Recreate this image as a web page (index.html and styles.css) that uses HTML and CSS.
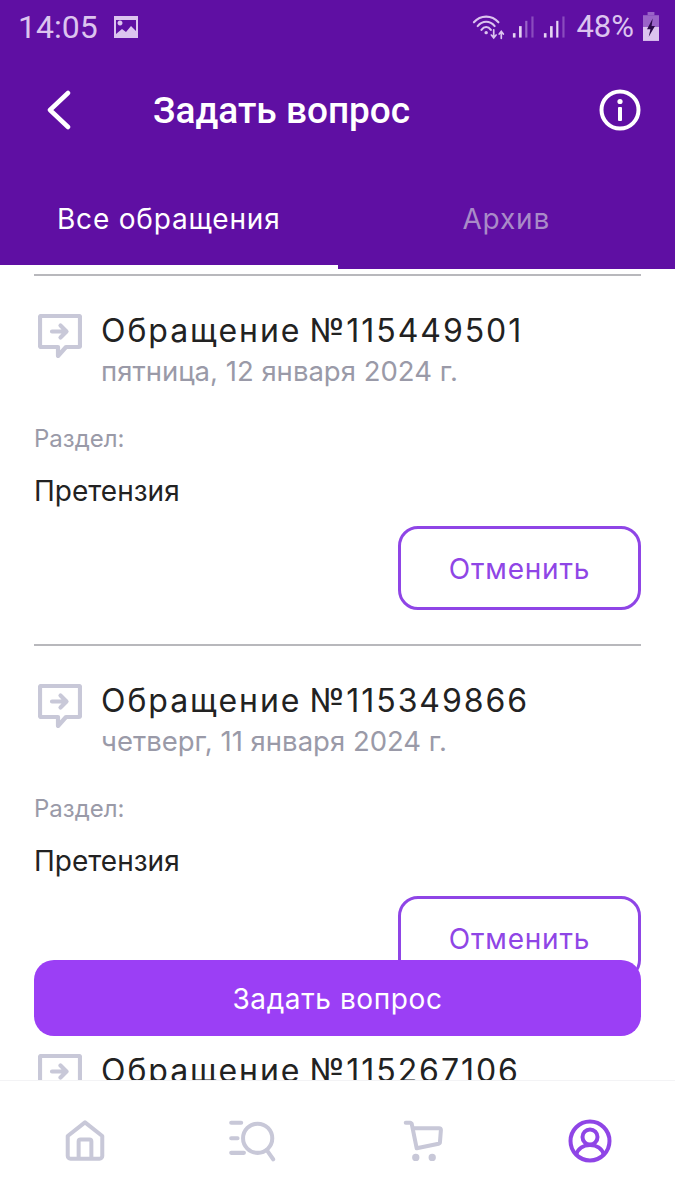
FILE: index.html
```html
<!DOCTYPE html>
<html lang="en">
<head>
    <meta charset="UTF-8">
    <meta name="viewport" content="width=device-width, initial-scale=1.0">
    <title>Задать вопрос</title>
    <link rel="stylesheet" href="styles.css">
</head>
<body>

    <div class="screen">
        <header class="top">
            <div class="status-bar">
                <div class="status-left">
                    <span class="clock">14:05</span>
                    <svg class="status-pic" width="26" height="24" viewBox="0 0 26 24">
                        <path fill="#dcc4ef" fill-rule="evenodd" d="M1 1h24v22H1z M7 5.500a2.500 2.500 0 1 0 .01 0z M3 19l6-5 4 3 5-6 5 5v-11H3z"/>
                    </svg>
                </div>
                <div class="status-right">
                    <svg class="wifi" width="34" height="28" viewBox="0 0 36 28" fill="none" stroke="#dcc4ef" stroke-width="2.200" stroke-linecap="round">
                        <path d="M2 9C9 1 21 1 28 9"/>
                        <path d="M6 13C11 7 19 7 24 13"/>
                        <path d="M10 17C13 13 17 13 20 17"/>
                        <circle cx="15" cy="20" r="1.800" fill="#dcc4ef" stroke="none"/>
                        <path d="M23 17v8M20.500 22.500l2.500 3 2.500-3M31 26v-7M28.800 21.500l2.200-2.800 2.200 2.800" stroke-width="1.800"/>
                    </svg>
                    <svg class="bars" width="22" height="26" viewBox="0 0 25 26">
                        <rect x="1" y="20" width="3" height="5" fill="#e6d5f3"/>
                        <rect x="8" y="12" width="3" height="13" fill="#e6d5f3"/>
                        <rect x="15" y="6" width="2.500" height="19" fill="#9a63c8"/>
                        <rect x="22" y="1" width="2.500" height="24" fill="#8a4cbe"/>
                    </svg>
                    <svg class="bars" width="22" height="26" viewBox="0 0 25 26">
                        <rect x="1" y="20" width="3" height="5" fill="#e6d5f3"/>
                        <rect x="8" y="12" width="3" height="13" fill="#e6d5f3"/>
                        <rect x="15" y="6" width="2.500" height="19" fill="#e6d5f3"/>
                        <rect x="22" y="1" width="2.500" height="24" fill="#8a4cbe"/>
                    </svg>
                    <span class="percent">48%</span>
                    <svg class="battery" width="16" height="30" viewBox="0 0 14 28" preserveAspectRatio="none">
                        <rect x="4" y="0" width="6" height="3" fill="#9a63c8"/>
                        <rect x="0" y="3" width="14" height="11" fill="#9a63c8"/>
                        <rect x="0" y="14" width="14" height="13" fill="#dcc4ef"/>
                        <path d="M8.500 6L3.500 16h3l-1.500 7 5.500-10H7.500z" fill="#2b0a4a"/>
                    </svg>
                </div>
            </div>

            <div class="toolbar">
                <svg class="back" width="28" height="40" viewBox="0 0 28 40" fill="none" stroke="#fff" stroke-width="4.500" stroke-linecap="round" stroke-linejoin="round">
                    <path d="M23 3L5 20l18 17"/>
                </svg>
                <h1>Задать вопрос</h1>
                <svg class="info" width="44" height="44" viewBox="0 0 44 44">
                    <circle cx="22" cy="22" r="18.500" fill="none" stroke="#fff" stroke-width="4"/>
                    <circle cx="22" cy="13.500" r="2.600" fill="#fff"/>
                    <rect x="20" y="19" width="4" height="14" rx="1" fill="#fff"/>
                </svg>
            </div>

            <div class="tabs">
                <div class="tab tab-active">Все обращения</div>
                <div class="tab">Архив</div>
            </div>
        </header>

        <main class="list">
            <section class="ticket">
                <div class="ticket-head">
                    <svg class="ticket-icon" width="44" height="44" viewBox="0 0 44 44" fill="none" stroke="#c8c8d8" stroke-width="4.200" stroke-linejoin="round" stroke-linecap="round">
                        <path d="M3 2h38a1 1 0 0 1 1 1v29a1 1 0 0 1-1 1H28l-8 9v-9H3a1 1 0 0 1-1-1V3a1 1 0 0 1 1-1z"/>
                        <path d="M14 17.500h14M22.500 11.500l6 6-6 6"/>
                    </svg>
                    <div>
                        <div class="ticket-title">Обращение №115449501</div>
                        <div class="ticket-date">пятница, 12 января 2024 г.</div>
                    </div>
                </div>
                <div class="field-label">Раздел:</div>
                <div class="field-value">Претензия</div>
                <div class="ticket-actions"><button class="cancel-button">Отменить</button></div>
            </section>

            <section class="ticket">
                <div class="ticket-head">
                    <svg class="ticket-icon" width="44" height="44" viewBox="0 0 44 44" fill="none" stroke="#c8c8d8" stroke-width="4.200" stroke-linejoin="round" stroke-linecap="round">
                        <path d="M3 2h38a1 1 0 0 1 1 1v29a1 1 0 0 1-1 1H28l-8 9v-9H3a1 1 0 0 1-1-1V3a1 1 0 0 1 1-1z"/>
                        <path d="M14 17.500h14M22.500 11.500l6 6-6 6"/>
                    </svg>
                    <div>
                        <div class="ticket-title">Обращение №115349866</div>
                        <div class="ticket-date">четверг, 11 января 2024 г.</div>
                    </div>
                </div>
                <div class="field-label">Раздел:</div>
                <div class="field-value">Претензия</div>
                <div class="ticket-actions"><button class="cancel-button">Отменить</button></div>
            </section>

            <section class="ticket">
                <div class="ticket-head">
                    <svg class="ticket-icon" width="44" height="44" viewBox="0 0 44 44" fill="none" stroke="#c8c8d8" stroke-width="4.200" stroke-linejoin="round" stroke-linecap="round">
                        <path d="M3 2h38a1 1 0 0 1 1 1v29a1 1 0 0 1-1 1H28l-8 9v-9H3a1 1 0 0 1-1-1V3a1 1 0 0 1 1-1z"/>
                        <path d="M14 17.500h14M22.500 11.500l6 6-6 6"/>
                    </svg>
                    <div>
                        <div class="ticket-title">Обращение №115267106</div>
                    </div>
                </div>
            </section>
        </main>

        <button class="ask-button">Задать вопрос</button>

        <nav class="bottom-nav">
            <svg width="40" height="43" viewBox="0 0 44 46" fill="none" stroke="#c8c8d8" stroke-width="4.400" stroke-linejoin="round">
                <path d="M3 18L22 3l19 15v22a3 3 0 0 1-3 3H6a3 3 0 0 1-3-3z"/>
                <path d="M15 43V24a2 2 0 0 1 2-2h10a2 2 0 0 1 2 2v19"/>
            </svg>
            <svg width="52" height="42" viewBox="0 0 54 46" fill="none" stroke="#c8c8d8" stroke-width="4.400" stroke-linecap="round">
                <path d="M2 3h11M2 20h7M2 36h14"/>
                <circle cx="31" cy="20" r="16"/>
                <path d="M41 33l7 10"/>
            </svg>
            <svg width="42" height="42" viewBox="0 0 44 46" fill="none" stroke="#c8c8d8" stroke-width="4.400" stroke-linecap="round" stroke-linejoin="round">
                <path d="M2 3h5l1.500 1 5.500 27 24-5a2 2 0 0 0 1.500-2l1-13a2 2 0 0 0-2-2H10"/>
                <circle cx="13" cy="41" r="1.800" fill="#c8c8d8"/>
                <circle cx="31" cy="41" r="1.800" fill="#c8c8d8"/>
            </svg>
            <svg width="44" height="44" viewBox="0 0 44 44" fill="none" stroke="#8f45e6" stroke-width="4">
                <circle cx="22" cy="22" r="19.500"/>
                <circle cx="22" cy="18" r="7.500"/>
                <path d="M8 36c2-7 8-10 14-10s12 3 14 10"/>
            </svg>
        </nav>
    </div>

</body>
</html>
```

FILE: styles.css
```css
* {
    box-sizing: border-box;
}

body {
    font-family: 'Inter', 'Liberation Sans', sans-serif;
    background-color: #fff;
    color: #222;
    margin: 0;
    padding: 0;
}

.screen {
    position: relative;
    width: 675px;
    height: 1200px;
    display: flex;
    flex-direction: column;
    overflow: hidden;
}

.top {
    background-color: #5f0fa3;
    color: #fff;
    height: 269px;
    flex-shrink: 0;
}

.status-bar {
    height: 52px;
    padding: 1px 16px 0 18px;
    display: flex;
    justify-content: space-between;
    align-items: center;
    font-family: 'Roboto', sans-serif;
    color: #dcc4ef;
    font-size: 31px;
}

.status-left, .status-right {
    display: flex;
    align-items: center;
}

.clock {
    font-size: 32px;
}

.status-pic {
    margin-left: 15px;
}

.bars {
    margin-left: 6px;
}

.bars + .bars {
    margin-left: 9px;
}

.percent {
    margin-left: 11px;
}

.battery {
    margin-left: 9px;
}

.toolbar {
    height: 116px;
    padding: 0 33px 0 45px;
    display: flex;
    align-items: center;
}

.toolbar h1 {
    flex: 1;
    margin: 0 0 0 80px;
    font-size: 37px;
    font-weight: 500;
    font-family: 'Roboto', sans-serif;
}

.tabs {
    display: flex;
    height: 101px;
}

.tab {
    flex: 1;
    height: 101px;
    display: flex;
    align-items: center;
    justify-content: center;
    padding-top: 4px;
    padding-bottom: 4px;
    font-size: 28px;
    color: #a98bc8;
    letter-spacing: 0.800px;
}

.tab-active {
    color: #fff;
    border-bottom: 4px solid #fff;
    padding-bottom: 0;
}

.list {
    flex: 1;
    min-height: 0;
    overflow: hidden;
    padding: 5px 34px 0;
}

.ticket {
    height: 370px;
    border-top: 2px solid #b8b8bc;
}

.ticket-head {
    display: flex;
    gap: 19px;
    padding: 38px 0 0 4px;
}

.ticket-icon {
    flex-shrink: 0;
}

.ticket-title {
    font-size: 32px;
    line-height: 36px;
    margin-top: -1px;
    letter-spacing: 1.950px;
    word-spacing: -3px;
    color: #222;
}

.ticket-date {
    font-size: 27.500px;
    line-height: 34px;
    margin-top: 5px;
    color: #9a9aa8;
}

.field-label {
    margin-top: 36px;
    font-size: 24px;
    line-height: 30px;
    color: #9a9aa8;
}

.field-value {
    margin-top: 20px;
    font-size: 28px;
    line-height: 34px;
    color: #222;
}

.ticket-actions {
    display: flex;
    justify-content: flex-end;
    margin-top: 18px;
}

.cancel-button {
    width: 243px;
    height: 84px;
    padding-top: 2px;
    background-color: #fff;
    border: 3px solid #8f45e6;
    border-radius: 20px;
    color: #8f45e6;
    font-family: inherit;
    font-size: 28px;
    letter-spacing: 0.800px;
}

.ask-button {
    position: absolute;
    left: 34px;
    top: 960px;
    width: 607px;
    height: 76px;
    padding-top: 2px;
    background-color: #9b3ff5;
    border: none;
    border-radius: 20px;
    color: #fff;
    font-family: inherit;
    font-size: 28px;
    letter-spacing: 0.600px;
}

.bottom-nav {
    height: 120px;
    flex-shrink: 0;
    background-color: #fff;
    border-top: 1px solid #f3f3f5;
    padding: 0 63px 0 65px;
    display: flex;
    justify-content: space-between;
    align-items: center;
}
```
